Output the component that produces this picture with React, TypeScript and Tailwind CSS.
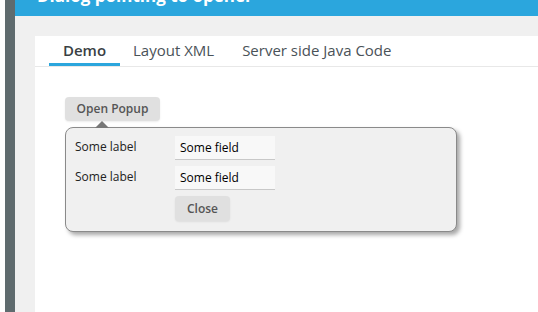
import React from "react";

export default function App() {
  const font = { fontFamily: '"Open Sans", "Noto Sans", sans-serif' };
  return (
    <div className="flex h-[312px] w-[538px] overflow-hidden bg-white" style={font}>
      <div className="w-[5px] bg-white" />
      <div className="w-[10px] bg-[#5f6b6e]" />
      <div className="flex flex-1 flex-col">
        <div className="h-[16px] overflow-hidden bg-[#2ba6dd] pl-[22px]">
          <div className="mt-[-16px] text-[17px] font-bold leading-[24px] text-white">Dialog pointing to opener</div>
        </div>
        <div className="flex flex-1 flex-col bg-[#f0f0f0] pl-[20px] pt-[20px]">
          <div className="flex flex-1 flex-col bg-white">
            <div className="flex h-[31px] border-b border-[#e8e8e8] pl-[14px] text-[15px] leading-[20px]">
              <div className="flex w-[71px] justify-center border-b-[3px] border-[#2ba6dd] pt-[4px] font-semibold text-[#3a3f44]">Demo</div>
              <div className="ml-[13px] pt-[4px] text-[#4a5258]">Layout XML</div>
              <div className="ml-[28px] pt-[4px] text-[#4a5258]">Server side Java Code</div>
            </div>
            <div className="pl-[30px] pt-[30px]">
              <div className="flex h-[24px] w-[95px] items-center justify-center rounded-[4px] bg-[#e0e0e0] text-[12px] font-semibold text-[#555] shadow-[0_1px_2px_rgba(0,0,0,0.08)]">
                Open Popup
              </div>
              <div className="relative mt-[6px] h-[105px] w-[392px] rounded-[8px] border border-[#8a8a8a] bg-[#f0f0f0] shadow-[3px_3px_4px_rgba(0,0,0,0.35)]">
                <div className="absolute left-[29px] top-[-7px] h-0 w-0 border-x-[7px] border-b-[7px] border-x-transparent border-b-[#777]" />
                <div className="flex flex-col gap-[6px] pl-[9px] pt-[8px] text-[12px] text-[#222]">
                  <div className="flex items-center">
                    <div className="w-[100px] pb-[3px]">Some label</div>
                    <div className="flex h-[24px] w-[100px] items-center border-b border-[#c8c8c8] bg-[#f8f8f8] pl-[5px] text-black">Some field</div>
                  </div>
                  <div className="flex items-center">
                    <div className="w-[100px] pb-[3px]">Some label</div>
                    <div className="flex h-[24px] w-[100px] items-center border-b border-[#c8c8c8] bg-[#f8f8f8] pl-[5px] text-black">Some field</div>
                  </div>
                  <div className="flex">
                    <div className="w-[100px]" />
                    <div className="flex h-[25px] w-[55px] items-center justify-center rounded-[4px] bg-[#e0e0e0] font-semibold text-[#555] shadow-[0_1px_2px_rgba(0,0,0,0.08)]">Close</div>
                  </div>
                </div>
              </div>
            </div>
          </div>
        </div>
      </div>
    </div>
  );
}
